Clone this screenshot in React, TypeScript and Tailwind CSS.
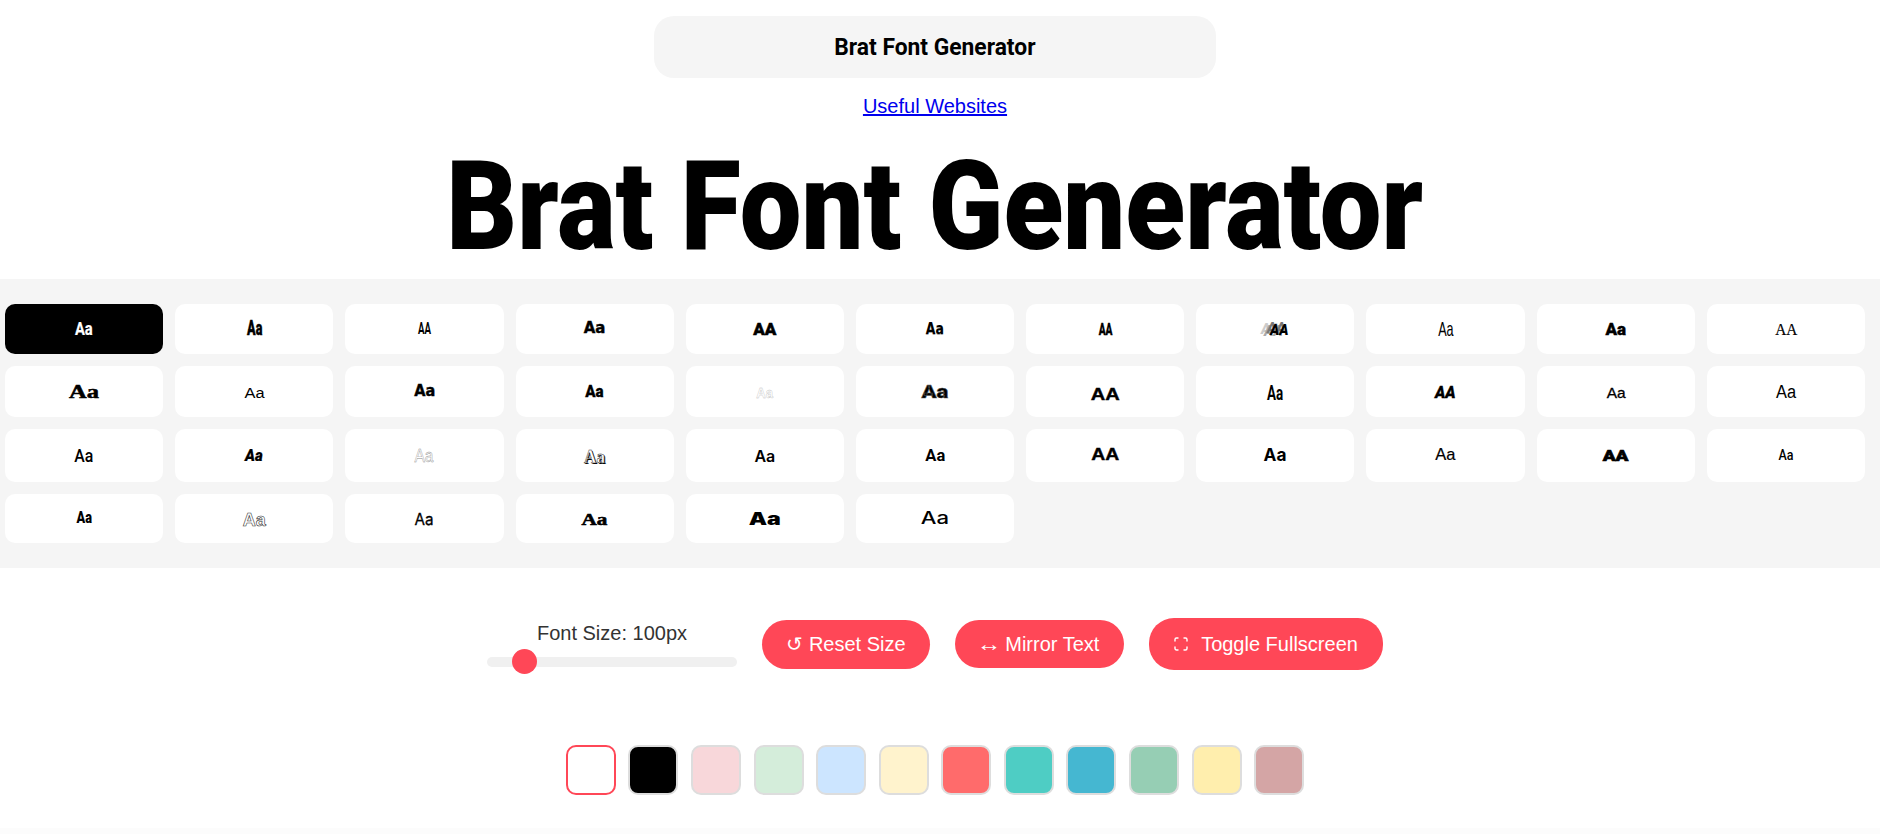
type Sample = { text: string; cls: string };

const samples: Sample[] = [
  // row 1
  { text: "Aa", cls: "text-white font-['Roboto'] font-bold text-[18px] scale-x-[0.82] [-webkit-text-stroke:0.2px_#fff]" },
  { text: "Aa", cls: "font-['Roboto'] font-black text-[21px] scale-x-[0.6] [-webkit-text-stroke:0.4px_#000] -translate-y-[1px]" },
  { text: "AA", cls: "font-['Roboto'] font-bold text-[17px] scale-x-[0.57] -translate-y-[1px]" },
  { text: "Aa", cls: "font-['DejaVu_Sans'] font-bold text-[15px] [-webkit-text-stroke:0.4px_#000] -translate-y-[1px]" },
  { text: "AA", cls: "font-['Roboto'] font-black text-[17px] [-webkit-text-stroke:0.5px_#000]" },
  { text: "Aa", cls: "font-['DejaVu_Sans'] font-bold text-[15px] scale-x-[0.83] text-[#666] [text-shadow:0_1px_0_#aaa]" },
  { text: "AA", cls: "font-['Roboto'] font-black text-[17px] scale-x-[0.6] [-webkit-text-stroke:0.3px_#000]" },
  { text: "AA", cls: "font-['Roboto'] font-black italic text-[14px] translate-x-[4px] translate-y-[1px] [text-shadow:-3px_-2px_0_#777,-6px_1px_0_#aaa,-9px_-1px_0_#ccc]" },
  { text: "Aa", cls: "font-['Liberation_Sans'] text-[21px] scale-x-[0.6] -translate-y-[1px]" },
  { text: "Aa", cls: "font-['Roboto'] font-black text-[17px] [-webkit-text-stroke:0.4px_#000]" },
  { text: "AA", cls: "font-['Liberation_Serif'] text-[17px] scale-x-[0.9] [-webkit-text-stroke:0.2px_#000]" },
  // row 2
  { text: "Aa", cls: "font-['Liberation_Serif'] font-bold text-[18px] [-webkit-text-stroke:0.5px_#000] scale-x-[1.36]" },
  { text: "Aa", cls: "font-['Liberation_Sans'] text-[14px] scale-x-[1.17] text-[#777] translate-y-[1px]" },
  { text: "Aa", cls: "font-['DejaVu_Sans'] font-bold text-[15px] scale-x-[0.97] [-webkit-text-stroke:0.4px_#000]" },
  { text: "Aa", cls: "font-['Roboto'] font-black text-[17px] scale-x-[0.89] [-webkit-text-stroke:0.3px_#000]" },
  { text: "Aa", cls: "font-['Liberation_Sans'] font-bold text-[15px] scale-x-[0.87] text-white [-webkit-text-stroke:0.4px_#bbb] translate-y-[1px]" },
  { text: "Aa", cls: "font-['Roboto'] font-black text-[18px] scale-x-[1.23] text-[#777] [-webkit-text-stroke:0.5px_#555]" },
  { text: "AA", cls: "font-['Liberation_Sans'] font-bold text-[17px] scale-x-[1.18] [-webkit-text-stroke:0.4px_#000] translate-y-[3px]" },
  { text: "Aa", cls: "font-['Roboto'] font-bold text-[20px] scale-x-[0.67] translate-y-[1px]" },
  { text: "AA", cls: "font-['Roboto'] font-black italic text-[17px] scale-x-[0.92] [-webkit-text-stroke:0.3px_#000] translate-y-[1px]" },
  { text: "Aa", cls: "font-['Liberation_Sans'] text-[15px] scale-x-[1.03] [-webkit-text-stroke:0.3px_#000] translate-y-[1px]" },
  { text: "Aa", cls: "font-['Liberation_Sans'] text-[18px] scale-x-[0.91]" },
  // row 3
  { text: "Aa", cls: "font-['Roboto'] font-medium text-[18px] scale-x-[0.88]" },
  { text: "Aa", cls: "font-['Roboto'] font-black italic text-[17px] scale-x-[0.89] [-webkit-text-stroke:0.2px_#000]" },
  { text: "Aa", cls: "font-['Liberation_Sans'] text-[18px] scale-x-[0.86] text-white [-webkit-text-stroke:0.4px_#888]" },
  { text: "Aa", cls: "font-['Liberation_Serif'] font-bold text-[19px] scale-x-[0.91] text-white [-webkit-text-stroke:0.5px_#222] [text-shadow:1px_1px_0_#000] translate-y-[1px]" },
  { text: "Aa", cls: "font-['Inter'] font-semibold text-[16px]" },
  { text: "Aa", cls: "font-['Roboto'] font-bold text-[17px] scale-x-[0.97]" },
  { text: "AA", cls: "font-['Liberation_Sans'] font-bold text-[17px] scale-x-[1.14] [-webkit-text-stroke:0.4px_#000] -translate-y-[1px]" },
  { text: "Aa", cls: "font-['Inter'] font-bold text-[18px] scale-x-[0.96] -translate-y-[1px]" },
  { text: "Aa", cls: "font-['Liberation_Sans'] text-[17px] scale-x-[0.97] [-webkit-text-stroke:0.2px_#000] -translate-y-[1px]" },
  { text: "AA", cls: "font-['Roboto'] font-black text-[14px] scale-x-[1.35] [-webkit-text-stroke:0.6px_#000]" },
  { text: "Aa", cls: "font-['Roboto'] font-medium text-[15px] scale-x-[0.83]" },
  // row 4
  { text: "Aa", cls: "font-['Roboto'] font-black text-[17px] scale-x-[0.75] -translate-y-[1px]" },
  { text: "Aa", cls: "font-['Liberation_Sans'] font-bold text-[18px] text-white [-webkit-text-stroke:0.6px_#333] translate-y-[1px]" },
  { text: "Aa", cls: "font-['Inter'] text-[16px] scale-x-[0.95] [-webkit-text-stroke:0.3px_#000]" },
  { text: "Aa", cls: "font-['Liberation_Serif'] font-bold text-[17px] [-webkit-text-stroke:0.6px_#000] scale-x-[1.24] translate-y-[1px]" },
  { text: "Aa", cls: "font-['Inter'] font-black text-[17px] scale-x-[1.36] translate-y-[1px]" },
  { text: "Aa", cls: "font-['Inter'] font-medium text-[17px] scale-x-[1.3]" },
];

const swatches = [
  "bg-white border-[#ff4757]",
  "bg-black border-[#ddd]",
  "bg-[#f8d7da] border-[#ddd]",
  "bg-[#d4edda] border-[#ddd]",
  "bg-[#cce5ff] border-[#ddd]",
  "bg-[#fff3cd] border-[#ddd]",
  "bg-[#ff6b6b] border-[#ddd]",
  "bg-[#4ecdc4] border-[#ddd]",
  "bg-[#45b7d1] border-[#ddd]",
  "bg-[#96ceb4] border-[#ddd]",
  "bg-[#ffeead] border-[#ddd]",
  "bg-[#d4a5a5] border-[#ddd]",
];

const FontCard = ({ sample, active }: { sample: Sample; active: boolean }) => (
  <button className={`flex items-center justify-center rounded-[10px] ${active ? "bg-black" : "bg-white"}`}>
    <span className={`block leading-none text-black ${sample.cls}`}>{sample.text}</span>
  </button>
);

export default function App() {
  return (
    <div className="h-[835px] w-[1880px] overflow-hidden bg-white font-['Liberation_Sans',sans-serif] text-[#333]">
      <div className="flex flex-col items-center pt-[16px] pr-[10px]">
        <div className="flex h-[62px] w-[562px] items-center justify-center rounded-[20px] bg-[#f5f5f5] font-['Roboto',sans-serif] text-[24px] font-bold text-black">
          <span className="scale-x-[0.95]">Brat Font Generator</span>
        </div>
        <a href="#" className="mt-[17px] text-[20px] leading-[23px] text-[#0000ee] underline">
          Useful Websites
        </a>
        <h1 className="mt-[20px] h-[141px] scale-x-[0.879] font-['Roboto',sans-serif] text-[125px] leading-[137px] font-black whitespace-nowrap text-black">
          Brat Font Generator
        </h1>
      </div>

      <div className="grid grid-cols-11 grid-rows-[50px_51px_53px_49px] gap-[12px] bg-[#f5f5f5] pt-[25px] pr-[15px] pb-[25px] pl-[5px]">
        {samples.map((s, i) => (
          <FontCard key={i} sample={s} active={i === 0} />
        ))}
      </div>

      <div className="flex items-center justify-center gap-[25px] pt-[50px] pr-[10px]">
        <div className="flex w-[250px] flex-col items-center">
          <span className="text-[20px] leading-[23px]">Font Size: 100px</span>
          <div className="relative mt-[12px] h-[10px] w-[250px] rounded-[5px] bg-[#f0f0f0]">
            <div className="absolute top-[-8px] left-[25px] h-[25px] w-[25px] rounded-full bg-[#ff4757]" />
          </div>
        </div>
        <button className="h-[49px] w-[168px] rounded-[25px] bg-[#ff4757] text-[20px] text-white">↺ Reset Size</button>
        <button className="h-[48px] w-[169px] rounded-[25px] bg-[#ff4757] text-[20px] text-white">
          <span className="inline-block -translate-x-[1px] scale-x-[1.25]">↔</span> Mirror Text
        </button>
        <button className="flex h-[52px] w-[234px] items-center justify-center gap-[13px] rounded-[25px] bg-[#ff4757] text-[20px] text-white">
          <svg width="14" height="14" viewBox="0 0 14 14" fill="none" stroke="currentColor" strokeWidth="1.4" strokeLinecap="round">
            <path d="M1 4V2.500A1.500 1.500 0 0 1 2.500 1H4" />
            <path d="M10 1h1.500A1.500 1.500 0 0 1 13 2.500V4" />
            <path d="M13 10v1.500a1.500 1.500 0 0 1-1.500 1.500H10" />
            <path d="M4 13H2.500A1.500 1.500 0 0 1 1 11.500V10" />
          </svg>
          Toggle Fullscreen
        </button>
      </div>

      <div className="mt-[75px] flex justify-center gap-[12.6px] pr-[10px]">
        {swatches.map((c) => (
          <div key={c} className={`h-[50px] w-[50px] rounded-[10px] border-2 ${c}`} />
        ))}
      </div>
      <div className="mt-[33px] h-[6px] bg-[#fcfcfc]" />
    </div>
  );
}
